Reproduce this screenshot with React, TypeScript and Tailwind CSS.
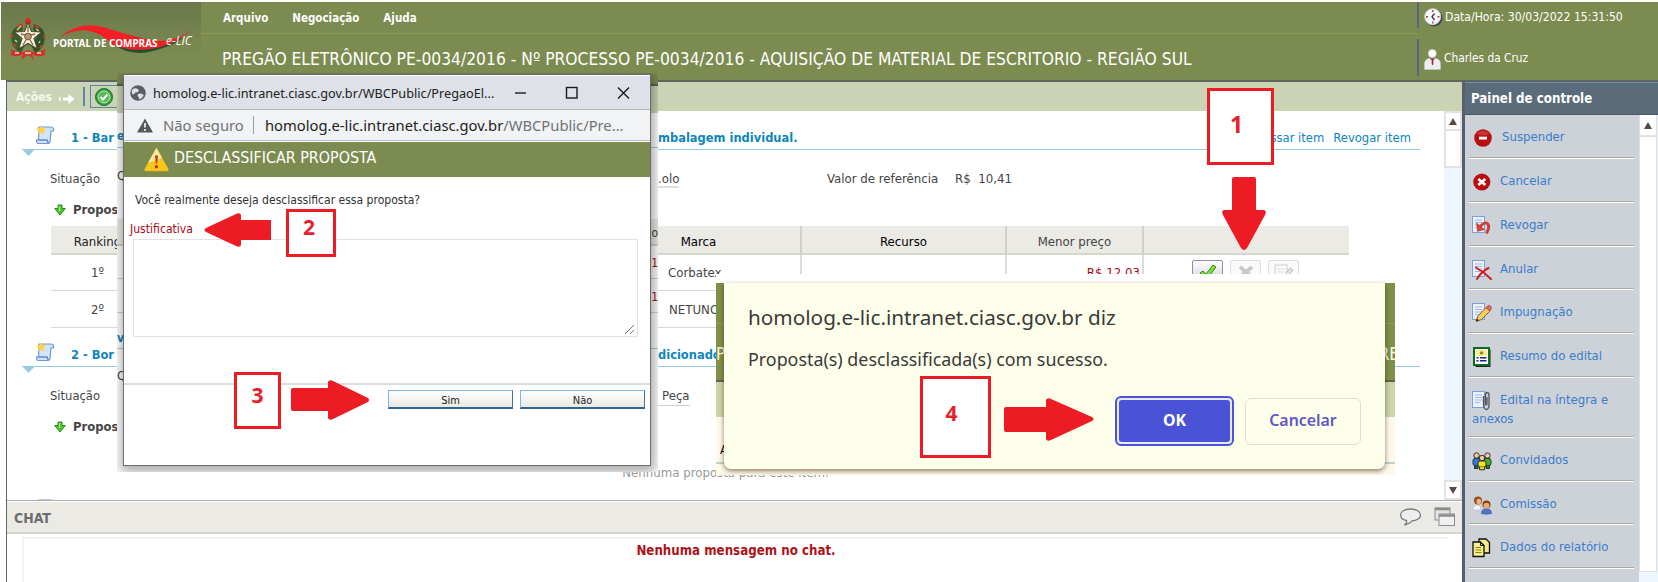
import type { ReactNode } from 'react';

const Scroll = () => (
  <svg width="19" height="20" viewBox="0 0 19 20">
    <path d="M3 2 L15 2 Q18.300 2.500 17.500 6 L15 6 L14 17 Q13 19 10.500 18.500 L2 18.500 Q0 17.500 0.500 15 L2.500 14.500 Z" fill="#d3e3f8" stroke="#6d9bd6" strokeWidth="1.200" />
    <path d="M2 15 H11 Q11.500 17 12.500 18" fill="none" stroke="#5f8acb" strokeWidth="1.400" />
    <path d="M5 0 l1.500 3 3.500.4 -2.500 2.300 .7 3.500 -3.200-1.700 -3 1.700 .6-3.500 -2.400-2.300 3.400-.4z" fill="#ffd140" />
  </svg>
);

const GreenArrow = () => (
  <svg width="12" height="12" viewBox="0 0 12 12">
    <path d="M4 1 H8 V4.500 H11.300 L6 11 L0.700 4.500 H4 Z" fill="#4fc52c" stroke="#2b8a1e" strokeWidth="1" strokeLinejoin="round" />
    <path d="M5.500 2 V7" stroke="#a6f07e" strokeWidth="1.300" />
  </svg>
);

const Emblem = () => (
  <svg width="38" height="44" viewBox="0 0 38 44">
    <path d="M13 7 Q2 10 2 21 Q3 32 12 36 L16 28 L10 20 L14 12 Z" fill="#35602d" />
    <path d="M25 7 Q36 10 36 21 Q35 32 26 36 L22 28 L28 20 L24 12 Z" fill="#2b5527" />
    <path d="M8 10 l3-2 3 2 M26 9 l4 2 M2.500 17 v4 M35.500 18 v4 M5 27 l2 3 M33 28 l-2 3 M9 14 l2 1 M29 15 l-2 1" stroke="#cc3a2c" strokeWidth="2" fill="none" />
    <path d="M12 9 l-4 4 M27 12 l3 2 M6 23 l2 2 M31 24 l-1 2" stroke="#d9d6a8" strokeWidth="1.200" fill="none" />
    <path d="M16 7 L16 3 L19 0.500 L22 3 L22 7 Z" fill="#d42a22" />
    <path d="M19 5.500 L22.500 14.500 L33 15 L25 21.500 L28.500 32 L19 26.500 L9.500 32 L13 21.500 L5 15 L15.500 14.500 Z" fill="#f6f1e4" stroke="#4e4228" strokeWidth="1.100" />
    <path d="M19 9 V15 M12 17 L16 18 M26 17 L22 18 M14 28 L17 23 M24 28 L21 23" stroke="#8a6a3c" strokeWidth="1.400" fill="none" />
    <circle cx="19" cy="19.500" r="3.400" fill="#b8926a" stroke="#5a4630" strokeWidth="0.800" />
    <path d="M2 32 Q10 38 19 33 Q28 38 36 32 L36 38 Q28 41 23 37 L25 43 L20 38.500 L18 38.500 L12 43 L14 37 Q9 41 2 38 Z" fill="#d2322a" />
    <path d="M6 36 h4 M28 36 h4 M16 36 h6" stroke="#f3d9d0" strokeWidth="1.400" />
  </svg>
);

const Doc = () => (
  <g>
    <rect x="0.500" y="0.500" width="12" height="16" fill="#eaf1fc" stroke="#7d9fd8" />
    <path d="M3 4 H10 M3 6.500 H10 M3 9 H10 M3 11.500 H8" stroke="#9db9e6" />
  </g>
);

const icons: Record<string, ReactNode> = {
  stop: (
    <g>
      <circle cx="11" cy="10" r="8.800" fill="#b80f12" />
      <path d="M4.500 6 A8 8 0 0 1 17.500 6 Q11 9 4.500 6" fill="#d85a5a" opacity=".5" />
      <rect x="7" y="8.700" width="8" height="2.800" fill="#fff" />
    </g>
  ),
  cancel: (
    <g>
      <circle cx="9.800" cy="10" r="8.600" fill="#b80f12" />
      <path d="M6.300 7 L13.300 13 M13.300 7 L6.300 13" stroke="#fff" strokeWidth="2.600" />
    </g>
  ),
  revoke: (
    <g>
      <Doc />
      <path d="M7.500 12.500 Q10.500 6.500 14.500 7 Q19 9 14.500 17.500" fill="none" stroke="#cf3b34" strokeWidth="2.800" />
      <path d="M4.500 7 L5.500 15.500 L12.500 13.500 Z" fill="#d8433a" stroke="#b32a26" strokeWidth="0.500" />
    </g>
  ),
  annul: (
    <g>
      <Doc />
      <path d="M4 7.500 Q12 12 19 19 M16.500 8 Q9 12 5 19" stroke="#cf1f24" strokeWidth="2" fill="none" strokeLinecap="round" />
    </g>
  ),
  pencil: (
    <g>
      <Doc />
      <path d="M4 18.500 L6 13 L14 4.500 L18 8 L9.500 16.500 Z" fill="#f5cf5b" stroke="#8a6420" strokeWidth="1" />
      <path d="M14 4.500 L16 2.500 Q19 2 19.500 5 L18 8 Z" fill="#ea6a6a" stroke="#a33" strokeWidth="0.700" />
      <path d="M4 18.500 L5 15.500 L7 17.500 Z" fill="#222" />
    </g>
  ),
  summary: (
    <g>
      <rect x="3.500" y="2.500" width="15" height="17.500" fill="#222" />
      <rect x="2" y="1" width="15" height="17" fill="#fff" stroke="#0c6b1c" strokeWidth="2" />
      <rect x="4" y="3" width="11" height="6" fill="#f6f28a" />
      <circle cx="9.500" cy="6" r="1.800" fill="#8a8a30" />
      <path d="M4.500 10.800 h2 M8 10.800 h6.500 M4.500 13.800 h2 M8 13.800 h6.500" stroke="#1c1c90" strokeWidth="1.500" />
    </g>
  ),
  attach: (
    <g>
      <Doc />
      <path d="M11.500 5 V14 Q12 18.500 14.500 18.500 Q17 18 17 14 V4 Q17 1.500 15 1.500 Q13.500 1.500 13.500 4 V13 Q14.300 15 15 13 V6" fill="none" stroke="#555" strokeWidth="1.300" />
    </g>
  ),
  guests: (
    <g stroke="#222" strokeWidth="0.900">
      <rect x="1" y="7.500" width="7" height="7" rx="2" fill="#2d7be0" />
      <circle cx="4.500" cy="4.500" r="2.700" fill="#f3c9a0" />
      <path d="M2.500 14.500 v3 h3.500 v-3" fill="#274f9c" />
      <rect x="12" y="7.500" width="7" height="7" rx="2" fill="#3fae37" />
      <circle cx="15.500" cy="4.500" r="2.700" fill="#f3c9a0" />
      <path d="M14 14.500 v3 h3.500 v-3" fill="#2c7a26" />
      <rect x="6" y="10" width="8" height="6" rx="2" fill="#f1e51e" />
      <circle cx="10" cy="7" r="2.700" fill="#f3c9a0" />
      <path d="M7.500 16 v2.800 h5 v-2.800" fill="#e0d21a" />
    </g>
  ),
  committee: (
    <g>
      <circle cx="6" cy="5.500" r="4" fill="#9a4f1f" />
      <ellipse cx="6.800" cy="6.500" rx="2.300" ry="2.800" fill="#eeb47c" />
      <path d="M1 15 Q1 10 6 10 L9 12 L8 15 Z" fill="#f4f4fb" stroke="#b9b9cf" strokeWidth="0.600" />
      <path d="M9.500 18.500 Q9.500 14 14.500 13.800 Q19.500 14 19.500 18.500 Q14 20 9.500 18.500" fill="#4b76c9" stroke="#2f509a" strokeWidth="0.600" />
      <circle cx="14.500" cy="9.500" r="4" fill="#7d4218" />
      <ellipse cx="14.500" cy="10.800" rx="2.900" ry="3" fill="#eeab70" />
    </g>
  ),
  report: (
    <g stroke="#111" strokeWidth="1.300">
      <path d="M7 1 H14 L17.500 4.500 V15 H7 Z" fill="#f4ea8a" />
      <path d="M1 4 H8.500 L12 7.500 V18.500 H1 Z" fill="#f8f08e" />
      <path d="M8.500 4 V7.500 H12" fill="none" strokeWidth="1" />
      <path d="M3.500 9.500 H9 M3.500 12 H9.500 M3.500 14.500 H9.500" stroke="#8a7d20" strokeWidth="1" />
    </g>
  ),
};

const actions: { icon: string; label: string; extra?: string; height: string }[] = [
  { icon: 'stop', label: 'Suspender', height: 'h-[44px]' },
  { icon: 'cancel', label: 'Cancelar', height: 'h-[44px]' },
  { icon: 'revoke', label: 'Revogar', height: 'h-[44px]' },
  { icon: 'annul', label: 'Anular', height: 'h-[43px]' },
  { icon: 'pencil', label: 'Impugnação', height: 'h-[44px]' },
  { icon: 'summary', label: 'Resumo do edital', height: 'h-[44px]' },
  { icon: 'attach', label: 'Edital na íntegra e', extra: 'anexos', height: 'h-[60px]' },
  { icon: 'guests', label: 'Convidados', height: 'h-[44px]' },
  { icon: 'committee', label: 'Comissão', height: 'h-[43px]' },
  { icon: 'report', label: 'Dados do relatório', height: 'h-[44px]' },
];

function Triangle({ down = false }: { down?: boolean }) {
  return (
    <svg width="8" height="7" viewBox="0 0 8 7">
      <path d={down ? 'M0 0 H8 L4 7 Z' : 'M0 7 H8 L4 0 Z'} fill="#554a44" />
    </svg>
  );
}

function Header() {
  return (
    <header className="ml-px mt-[2px] flex h-[78px] shrink-0 bg-[#7c8b50] text-white">
      <div className="relative flex h-[78px] w-[200px] items-start bg-linear-to-b from-[#6b784c] to-[#7c8b50] to-70% pl-2 pt-[15px]">
        <Emblem />
        <svg className="absolute left-[54px] top-[20px]" width="140" height="34" viewBox="0 0 140 34">
          <path d="M58 22 Q76 35 98 29 Q118 24 128 16 L96 24 Z" fill="#1b5230" />
          <path d="M5 15 Q24 -1 48 5 Q72 13 95 18 Q118 22 137 8 Q118 24 96 27 Q72 30 57 22 Q45 10 30 8 Q15 9 5 15 Z" fill="#f31f24" />
        </svg>
        <div className="relative flex items-center pl-[6px] pt-[18px] leading-3">
          <span className="w-[106px] whitespace-nowrap font-['Noto_Sans'] text-[9.95px] font-bold">PORTAL DE COMPRAS</span>
          <span className="pl-[7px] pb-[3px] font-['Open_Sans'] text-[12px] italic">e-LIC</span>
        </div>
      </div>
      <div className="flex flex-1 flex-col">
        <nav className="flex h-[32px] items-center gap-[24px] border-b border-[#8d9c5a] pl-[22px] pt-[2px] text-[11.5px] font-bold">
          <span>Arquivo</span>
          <span>Negociação</span>
          <span>Ajuda</span>
        </nav>
        <h1 className="whitespace-nowrap pl-[21px] pt-[13px] text-[17.3px] leading-6">
          PREGÃO ELETRÔNICO PE-0034/2016 - Nº PROCESSO PE-0034/2016 - AQUISIÇÃO DE MATERIAL DE ESCRITORIO - REGIÃO SUL
        </h1>
      </div>
      <div className="flex w-[241px] flex-col text-[12.1px]">
        <div className="flex h-[26px] items-center gap-[2px] border-l-2 border-[#5a6482] pl-[5px] pt-[5px]">
          <svg width="19" height="19" viewBox="0 0 19 19">
            <circle cx="10" cy="10" r="8.500" fill="#3c4550" />
            <circle cx="8.700" cy="8.700" r="8" fill="#f7f9fc" stroke="#c8d0dc" />
            <path d="M8.700 2 v2 M8.700 13.500 v2 M2 8.700 h2 M13.500 8.700 h2" stroke="#d33" strokeWidth="1.500" />
            <path d="M10.500 5.500 L8 8.700 L10.500 12" fill="none" stroke="#333" strokeWidth="1.300" />
          </svg>
          <span>Data/Hora: 30/03/2022 15:31:50</span>
        </div>
        <div className="mt-[11px] flex h-[37px] items-center gap-[3px] border-l-2 border-[#5a6482] pl-[5px] pt-[3px] text-[11.8px]">
          <svg width="17" height="21" viewBox="0 0 17 21">
            <path d="M0.500 20.500 V14 Q1 10 5 9.500 H12 Q16 10 16.500 14 V20.500 Z" fill="#eceef4" stroke="#c3c6d4" strokeWidth="0.600" />
            <path d="M6.500 9.500 L8.500 12 L10.500 9.500 M8.500 10 L8 14 L8.500 16 L9 14 Z" fill="#a02030" stroke="#a02030" strokeWidth="0.800" />
            <circle cx="8.300" cy="4.500" r="4" fill="#fafafa" stroke="#d2d2da" strokeWidth="0.600" />
          </svg>
          <span>Charles da Cruz</span>
        </div>
      </div>
    </header>
  );
}

function ItemHeader({ title, rest, children }: { title: string; rest?: string; children?: ReactNode }) {
  return (
    <div className="h-[39px] shrink-0 pl-[15px]">
      <div className="relative flex h-[39px] w-[1398px] items-end whitespace-nowrap border-b border-[#94c9e2] pb-px text-[12.75px] leading-5 text-[#0d86bd]">
        <svg className="absolute left-0 top-[38px]" width="13" height="8" viewBox="0 0 13 8">
          <path d="M0 0 H13 L6.500 7 Z" fill="#97cbe3" />
        </svg>
        <div className="mb-[3px] w-[49px] pl-[14px]"><Scroll /></div>
        <b className="w-[587px]">{title}</b>
        <b>{rest}</b>
        <div className="ml-auto flex gap-[9px] pr-[9px] text-[12.9px]">{children}</div>
      </div>
    </div>
  );
}

function Proposals() {
  return (
    <div className="mt-px flex h-[30px] shrink-0 items-center gap-[7px] pl-[47px] text-[12.9px] font-bold">
      <GreenArrow />
      <span>Propos</span>
    </div>
  );
}

const cols = 'grid w-[1298px] grid-cols-[93px_453px_205px_205px_137px_205px]';

function RowButton({ faded, children }: { faded?: boolean; children: ReactNode }) {
  return (
    <span className={faded ? 'flex h-[26px] w-[31px] items-start justify-center rounded-[2px] border border-[#dcdce4] bg-[#fafafc] pt-[3px]' : 'flex h-[26px] w-[31px] items-start justify-center rounded-[2px] border border-[#8e8eaa] bg-linear-to-b from-white to-[#c9c9dd] pt-[3px]'}>
      {children}
    </span>
  );
}

function Content() {
  return (
    <div className="flex h-[389px] shrink-0 text-[13.1px] text-[#444]">
      <div className="flex w-[1437px] flex-col overflow-hidden">
        <ItemHeader title="1 - Bar" rest="mbalagem individual.">
          <span>ssar item</span>
          <span>Revogar item</span>
        </ItemHeader>
        <div className="mt-[14px] flex h-[30px] shrink-0 items-center pl-[43px]">
          <span className="w-[608px] text-[12.85px]">Situação</span>
          <span className="w-[169px]"><span className="border-b-2 border-[#e2dfe2]">.olo</span></span>
          <span className="w-[128px]">Valor de referência</span>
          <span>R$&nbsp; 10,41</span>
        </div>
        <Proposals />
        <div className="ml-[44px] mt-px shrink-0">
          <div className={cols + ' h-[29px] border-b-2 border-[#d6d5ce] bg-[#ebeae4] text-center leading-[31px]'}>
            <span className="text-[#222]">Ranking</span>
            <span />
            <span className="border-r-2 border-[#d0cfca] text-black">Marca</span>
            <span className="border-r-2 border-[#d0cfca] text-black">Recurso</span>
            <span className="border-r-2 border-[#d0cfca]">Menor preço</span>
            <span />
          </div>
          <div className={cols + ' h-[36px] border-b border-[#d8d8d8] leading-[36px]'}>
            <span className="text-center">1º</span>
            <span />
            <span className="border-r-2 border-[#dcdcdc] pl-[71px]">Corbatex</span>
            <span className="border-r-2 border-[#dcdcdc]" />
            <span className="border-r-2 border-[#dcdcdc] pr-[2px] text-right text-[#a80c12]">R$ 12,03</span>
            <span className="flex gap-[7px] pl-[48px] pt-[5px]">
              <RowButton>
                <svg width="18" height="16" viewBox="0 0 18 16"><path d="M1 9 L4 7 L7 10 L14 1 L17 3 L8 15 Z" fill="#7fdc3a" stroke="#3a8a1c" /></svg>
              </RowButton>
              <RowButton faded>
                <svg width="18" height="16" viewBox="0 0 18 16"><path d="M3 3 L15 13 M15 3 L3 13" stroke="#c9c9c9" strokeWidth="4" /></svg>
              </RowButton>
              <RowButton faded>
                <svg width="20" height="18" viewBox="0 0 20 18"><rect x="1" y="1" width="12" height="15" fill="#fafafa" stroke="#ccc" /><path d="M3 5 h8 M3 8 h7" stroke="#ddd" /><path d="M9 13 L16 4 L19 6 L12 14 Z" fill="#e3e3e3" stroke="#bbb" /></svg>
              </RowButton>
            </span>
          </div>
          <div className={cols + ' h-[37px] border-b border-[#d8d8d8] leading-[37px]'}>
            <span className="text-center">2º</span>
            <span />
            <span className="pl-[72px]">NETUNO</span>
          </div>
        </div>
        <ItemHeader title="2 - Bor" rest="dicionado" />
        <div className="mt-[14px] flex h-[30px] shrink-0 items-center pl-[43px]">
          <span className="w-[608px] text-[12.85px]">Situação</span>
          <span className="border-b border-[#cfcfcf] pl-[4px]">Peça</span>
        </div>
        <Proposals />
        <p className="mt-[17px] h-[26px] shrink-0 text-center leading-[27px] text-[#999]">Nenhuma proposta para este item.</p>
        <div className="-mt-px"><ItemHeader title="" /></div>
      </div>
      <div className="flex w-[18px] flex-col items-center bg-[#eef6ff]">
        <div className="flex h-[20px] w-full items-center justify-center border-2 border-[#e2e2e2] bg-white"><Triangle /></div>
        <div className="h-[37px] w-full border-2 border-t-0 border-[#e2e2e2] bg-white" />
        <div className="mt-auto flex h-[20px] w-full items-center justify-center border-2 border-[#e2e2e2] bg-white"><Triangle down /></div>
      </div>
    </div>
  );
}

function Chat() {
  return (
    <section className="flex flex-1 flex-col border-t border-[#adadad] pt-px">
      <div className="flex h-[32px] shrink-0 items-center border-b-2 border-[#d5d4cd] bg-[#ebeae4] pl-[7px] pr-[6px]">
        <span className="flex-1 pt-[2px] text-[13.9px] font-bold leading-5 text-[#6c6c6c]">CHAT</span>
        <svg width="23" height="20" viewBox="0 0 23 20">
          <path d="M11.500 2 C17.500 2 21.500 4.500 21.500 8 C21.500 11.500 17 13.800 13 13.800 Q11 16.500 5.500 18 Q8.500 15.500 7.500 13.500 C4 12.800 1.500 11 1.500 8 C1.500 4.500 5.500 2 11.500 2 Z" fill="#eeeeee" stroke="#7b7b7b" strokeWidth="1.300" />
        </svg>
        <svg className="ml-[12px]" width="22" height="20" viewBox="0 0 22 20">
          <rect x="1" y="1" width="15" height="12" fill="#e4e4e4" stroke="#8b8b8b" />
          <path d="M1 2 H16" stroke="#8b8b8b" strokeWidth="2.500" />
          <rect x="5" y="7" width="15.500" height="11.500" fill="#f1f1f1" stroke="#8b8b8b" />
          <path d="M5 8.500 H20.500" stroke="#8b8b8b" strokeWidth="2.500" />
        </svg>
      </div>
      <div className="ml-[15px] mr-[14px] mt-[3px] flex-1 border-l-2 border-t-2 border-[#f3f3f3] pt-[2px] text-center text-[13.2px] font-bold leading-[20px] text-[#b01217]">
        Nenhuma mensagem no chat.
      </div>
    </section>
  );
}

function Sidebar() {
  return (
    <aside className="flex w-[196px] shrink-0 flex-col border-l-[3px] border-[#55606a] bg-[#cdd2d9]">
      <div className="h-[33px] shrink-0 border-b border-t border-b-[#49596a] border-t-[#6f8fb4] bg-[#5a6b7a] pl-[6px] text-[13.2px] font-bold leading-[32px] text-white">Painel de controle</div>
      <div className="flex flex-1 overflow-hidden">
        <div className="w-[174px] pl-[4px] pr-[5px] text-[13.05px] text-[#3b7cc9]">
          {actions.map((a) => (
            <div key={a.label} className={a.height + ' flex flex-col border-b border-white pt-[10px]'}>
              <div className="flex-1 border-b border-[#a9a9a4]">
                <div className="flex h-[20px] items-center pl-[3px]">
                  <svg className="mt-[5px] shrink-0" width="20" height="20" viewBox="0 0 20 20">{icons[a.icon]}</svg>
                  <span className={a.icon === 'stop' ? 'whitespace-nowrap pl-[10px] pt-[3px]' : 'whitespace-nowrap pl-[8px] pt-[3px]'}>{a.label}</span>
                </div>
                {a.extra && <div className="pl-[3px] pt-px leading-[20px]">{a.extra}</div>}
              </div>
            </div>
          ))}
        </div>
        <div className="flex flex-1 flex-col bg-[#eef6ff]">
          <div className="flex h-[457px] w-[18px] shrink-0 flex-col border-x border-b border-[#e0e0e0] bg-white">
            <div className="flex h-[22px] items-center justify-center border-b-2 border-[#e0e0e0]"><Triangle /></div>
          </div>
        </div>
      </div>
    </aside>
  );
}

function ConfirmWindow() {
  return (
    <div className="absolute left-[117px] top-[73px] h-[399px] w-[541px] overflow-hidden bg-white">
      <div className="flex h-full flex-col">
        <div className="h-[11px] bg-[#7c8b50]" />
        <div className="h-[2px] bg-[#5c6354]" />
        <div className="h-[27px] bg-[#cad4b5]" />
        <div className="flex h-[35px] items-end border-b border-[#9bcde4] pb-[3px] text-[12px] font-bold leading-4 text-[#0d86bd]">e</div>
        <div className="h-[71px] pt-[20px] text-[13px] leading-4 text-[#444]">Q</div>
        <div className="h-[27px] border-b-2 border-[#d0cfca] bg-[#ebeae4] text-right text-[12px] leading-[28px] text-[#444]">ço</div>
        <div className="h-[33px] border-b border-[#d0d0d0] text-right text-[12px] leading-[34px] text-[#a80c12]">1</div>
        <div className="h-[34px] border-b border-[#d0d0d0] text-right text-[12px] leading-[36px] text-[#a80c12]">1</div>
        <div className="h-[36px] border-b border-[#9bcde4] pt-[17px] text-[12px] font-bold leading-4 text-[#0d86bd]">vi</div>
        <div className="pt-[19px] text-[13px] leading-4 text-[#444]">Q</div>
      </div>
      <div className="absolute left-[6px] top-[1px] flex h-[392px] w-[528px] flex-col border border-[#6a6c70] bg-white pt-px shadow-[1px_3px_10px_3px_rgba(0,0,0,0.32)]">
        <div className="flex h-[34px] shrink-0 items-center border-b border-[#b4b6ba] bg-[#dee1e7] pl-[6px]">
          <svg width="16" height="16" viewBox="0 0 16 16">
            <circle cx="8" cy="8" r="7.800" fill="#5b5f63" />
            <path d="M1.800 5 Q4 2.500 7 3.500 L9 5.500 Q8 8 5 7.500 Q5 9 3 9.500 Q1.300 8 1.800 5 Z M8 9 Q11 7.500 13.800 10 Q12.500 13.500 9 14.300 Q9.500 11.800 7.500 11 Z" fill="#dee1e7" />
          </svg>
          <span className="w-[369px] shrink-0 whitespace-nowrap pl-[7px] font-['Noto_Sans'] text-[12.7px] leading-5 text-[#222]">homolog.e-lic.intranet.ciasc.gov.br/WBCPublic/PregaoEl...</span>
          <svg className="shrink-0" width="115" height="14" viewBox="0 0 115 14" fill="none" stroke="#1a1a1a" strokeWidth="1.400">
            <path d="M0 7 H11" />
            <rect x="51.500" y="1.500" width="10.500" height="10.500" />
            <path d="M103 1.500 L114 12.500 M114 1.500 L103 12.500" />
          </svg>
        </div>
        <div className="flex h-[31px] shrink-0 items-center whitespace-nowrap border-b border-[#b9bbbe] bg-[#f1f3f4] pl-[13px] font-['Noto_Sans'] text-[14.8px] leading-6 text-[#6f7276]">
          <svg width="16" height="15" viewBox="0 0 16 15">
            <path d="M8 0.500 L16 14.500 H0 Z" fill="#54585c" />
            <path d="M8 5 V9.500 M8 11 V13" stroke="#f1f3f4" strokeWidth="1.700" />
          </svg>
          <span className="w-[100px] pl-[10px]">Não seguro</span>
          <span className="mr-[11px] h-[18px] w-px bg-[#9a9da1]" />
          <span className="text-[14.75px]"><span className="text-[#222]">homolog.e-lic.intranet.ciasc.gov.br</span>/WBCPublic/Pre...</span>
        </div>
        <div className="mt-px flex h-[35px] shrink-0 items-center bg-[#7c8b50] pl-[20px] text-[15.9px] text-white">
          <svg width="25" height="25" viewBox="0 0 25 25">
            <path d="M12.500 1 L24.500 22.500 Q24.500 24 23 24 H2 Q0.500 24 0.500 22.500 Z" fill="#f6c81a" stroke="#e0b020" strokeWidth="0.600" />
            <path d="M12.500 1 L18 11 Q10 14 4 16 Z" fill="#fbe9a0" />
            <path d="M11 8.500 H14 L13.200 16.500 H11.800 Z" fill="#c4321c" />
            <circle cx="12.500" cy="19.800" r="1.700" fill="#c4321c" />
          </svg>
          <span className="whitespace-nowrap pb-[3px] pl-[5px]">DESCLASSIFICAR PROPOSTA</span>
        </div>
        <div className="flex h-[208px] shrink-0 flex-col border-b-2 border-[#dcdcdc]">
          <p className="pl-[11px] pt-[14px] text-[12.05px] leading-[18px] text-[#333]">Você realmente deseja desclassificar essa proposta?</p>
          <p className="pl-[6px] pt-[11px] text-[12.1px] leading-[18px] text-[#a80c12]">Justificativa</p>
          <div className="ml-[9px] mt-px flex h-[98px] w-[505px] items-end justify-end border border-[#e3e3e3]">
            <svg width="13" height="13" viewBox="0 0 13 13" stroke="#777" strokeWidth="1">
              <path d="M1 11 L10 2 M6 11 L10 7" />
            </svg>
          </div>
        </div>
        <div className="flex gap-[7px] pl-[264px] pt-[5px] text-center text-[11px] leading-[19px] text-[#222]">
          <span className="h-[19px] w-[125px] border border-b-2 border-b-[#2f6390] border-l-[#7fb8e6] border-r-[#3d75a5] border-t-[#7fb8e6] bg-linear-to-b from-white to-[#e9e8e2]">Sim</span>
          <span className="h-[19px] w-[125px] border border-b-2 border-b-[#2f6390] border-l-[#7fb8e6] border-r-[#3d75a5] border-t-[#7fb8e6] bg-linear-to-b from-white to-[#e9e8e2]">Não</span>
        </div>
      </div>
    </div>
  );
}

function BrowserAlert() {
  return (
    <div className="absolute left-[716px] top-[274px] h-[201px] w-[679px] overflow-hidden bg-white">
      <div className="flex h-full flex-col pt-[9px]">
        <div className="h-[41px] border-b border-[#8f9f5c] bg-[#7f9148]" />
        <div className="flex h-[56px] items-start justify-between bg-[#7f9148] pt-[18px] text-[17.3px] leading-6 text-[#fff8e0]"><span>P</span><span className="-mr-[4px]">RE</span></div>
        <div className="h-[2px] bg-[#5f6350]" />
        <div className="h-[35px] bg-[#cdd6a8]" />
        <div className="h-[47px] border-b-2 border-[#c2d2cc] bg-[#fff9ec] pl-[4px] pt-[25px] text-[13px] leading-4">A</div>
        <div className="flex-1 bg-[#fff9ea]" />
      </div>
      <div className="absolute left-[8px] top-[9px] h-[186px] w-[661px] rounded-b-[7px] bg-[#feffea] pl-[24px] pt-[20px] font-['Noto_Sans'] text-[#3a3a3a] shadow-[0_2px_5px_rgba(70,40,10,0.6)]">
        <p className="text-[20.73px] leading-[29px]">homolog.e-lic.intranet.ciasc.gov.br diz</p>
        <p className="pt-[15px] text-[17.87px] leading-[25px]">Proposta(s) desclassificada(s) com sucesso.</p>
        <div className="mt-[24px] flex items-center gap-[11px] pl-[367px] text-center text-[15.9px] font-semibold leading-[42px]">
          <div className="h-[50px] w-[119px] rounded-[6px] border-2 border-[#4a52d6] bg-[#e6e9ff] p-[2px]">
            <div className="h-full rounded-[3px] bg-[#4a52d6] font-bold leading-[40px] text-white">OK</div>
          </div>
          <div className="h-[47px] w-[116px] rounded-[6px] border border-[#e3dccb] leading-[43px] text-[#6058c6]">Cancelar</div>
        </div>
      </div>
    </div>
  );
}

function Callouts() {
  const box = "absolute flex items-center justify-center border-[3px] border-[#ed1c24] bg-white font-['Open_Sans'] font-bold text-[#e8202a]";
  return (
    <>
      <div className={box + ' left-[1207px] top-[88px] h-[77px] w-[67px] pb-[4px] pr-[8px] text-[23px]'}>1</div>
      <div className={box + ' left-[286px] top-[209px] h-[48px] w-[50px] pb-[10px] pr-[4px] text-[21px]'}>2</div>
      <div className={box + ' left-[234px] top-[372px] h-[57px] w-[47px] pb-[9px] text-[21px]'}>3</div>
      <div className={box + ' left-[920px] top-[376px] h-[82px] w-[71px] pb-[6px] pr-[8px] text-[21px]'}>4</div>
      <svg className="absolute left-[1222px] top-[177px]" width="44" height="73" viewBox="0 0 44 73"><path d="M12 0 H32 Q34 0 34 2 V33 H42 Q45 34 43 38 L25 71 Q22 75 19 71 L1 38 Q-1 34 2 33 H10 V2 Q10 0 12 0 Z" fill="#ed1c24" /></svg>
      <svg className="absolute left-[204px] top-[213px]" width="67" height="34" viewBox="0 0 67 34"><path d="M67 7 V27 H37 V32 Q36 35 32 33 L2 19 Q-1 17 2 15 L32 1 Q36 -1 37 2 V7 Z" fill="#ed1c24" /></svg>
      <svg className="absolute left-[291px] top-[380px]" width="79" height="40" viewBox="0 0 79 40"><path d="M2 8 H37 V2 Q38 -1 42 1 L77 18 Q79 20 77 22 L42 39 Q38 41 37 38 V31 H2 Q0 31 0 29 V10 Q0 8 2 8 Z" fill="#ed1c24" /></svg>
      <svg className="absolute left-[1004px] top-[398px]" width="90" height="43" viewBox="0 0 90 43"><path d="M2 9 H42 V2 Q43 -1 47 1 L88 19 Q91 21 88 23 L47 42 Q43 44 42 41 V34 H2 Q0 34 0 32 V11 Q0 9 2 9 Z" fill="#ed1c24" /></svg>
    </>
  );
}

export default function App() {
  return (
    <div className="relative flex h-[582px] w-[1658px] flex-col overflow-hidden bg-white font-['DejaVu_Sans_Condensed',sans-serif]">
      <Header />
      <div className="ml-[6px] flex h-[502px] border-l border-t-2 border-[#5d6560]">
        <main className="flex w-[1455px] flex-col">
          <div className="flex h-[29px] shrink-0 items-center bg-[#cad4b5] pl-[9px]">
            <span className="w-[43px] text-[12px] font-bold text-[#f6f8f2]">Ações</span>
            <svg className="mt-[4px]" width="16" height="12" viewBox="0 0 16 12"><path d="M0 4 h1.500 v4 H0 Z M4 4.500 H9.500 V1 L15.500 6 L9.500 11 V7.500 H4 Z" fill="#fff" /></svg>
            <span className="ml-[8px] h-[19px] w-[2px] bg-[#5d88a2]" />
            <span className="ml-[5px] flex h-[23px] w-[40px] items-center border border-[#5b82a8] pl-[4px]">
              <svg width="18" height="18" viewBox="0 0 18 18">
                <circle cx="9" cy="9" r="8.500" fill="#2f9a3a" stroke="#1f7a2a" />
                <circle cx="9" cy="9" r="6" fill="#59bb55" stroke="#c7efc0" strokeWidth="1" />
                <path d="M5.500 9 L8 11.500 L12.500 6.500" fill="none" stroke="#fff" strokeWidth="2" />
              </svg>
            </span>
          </div>
          <Content />
          <Chat />
        </main>
        <Sidebar />
      </div>
      <ConfirmWindow />
      <BrowserAlert />
      <Callouts />
    </div>
  );
}
